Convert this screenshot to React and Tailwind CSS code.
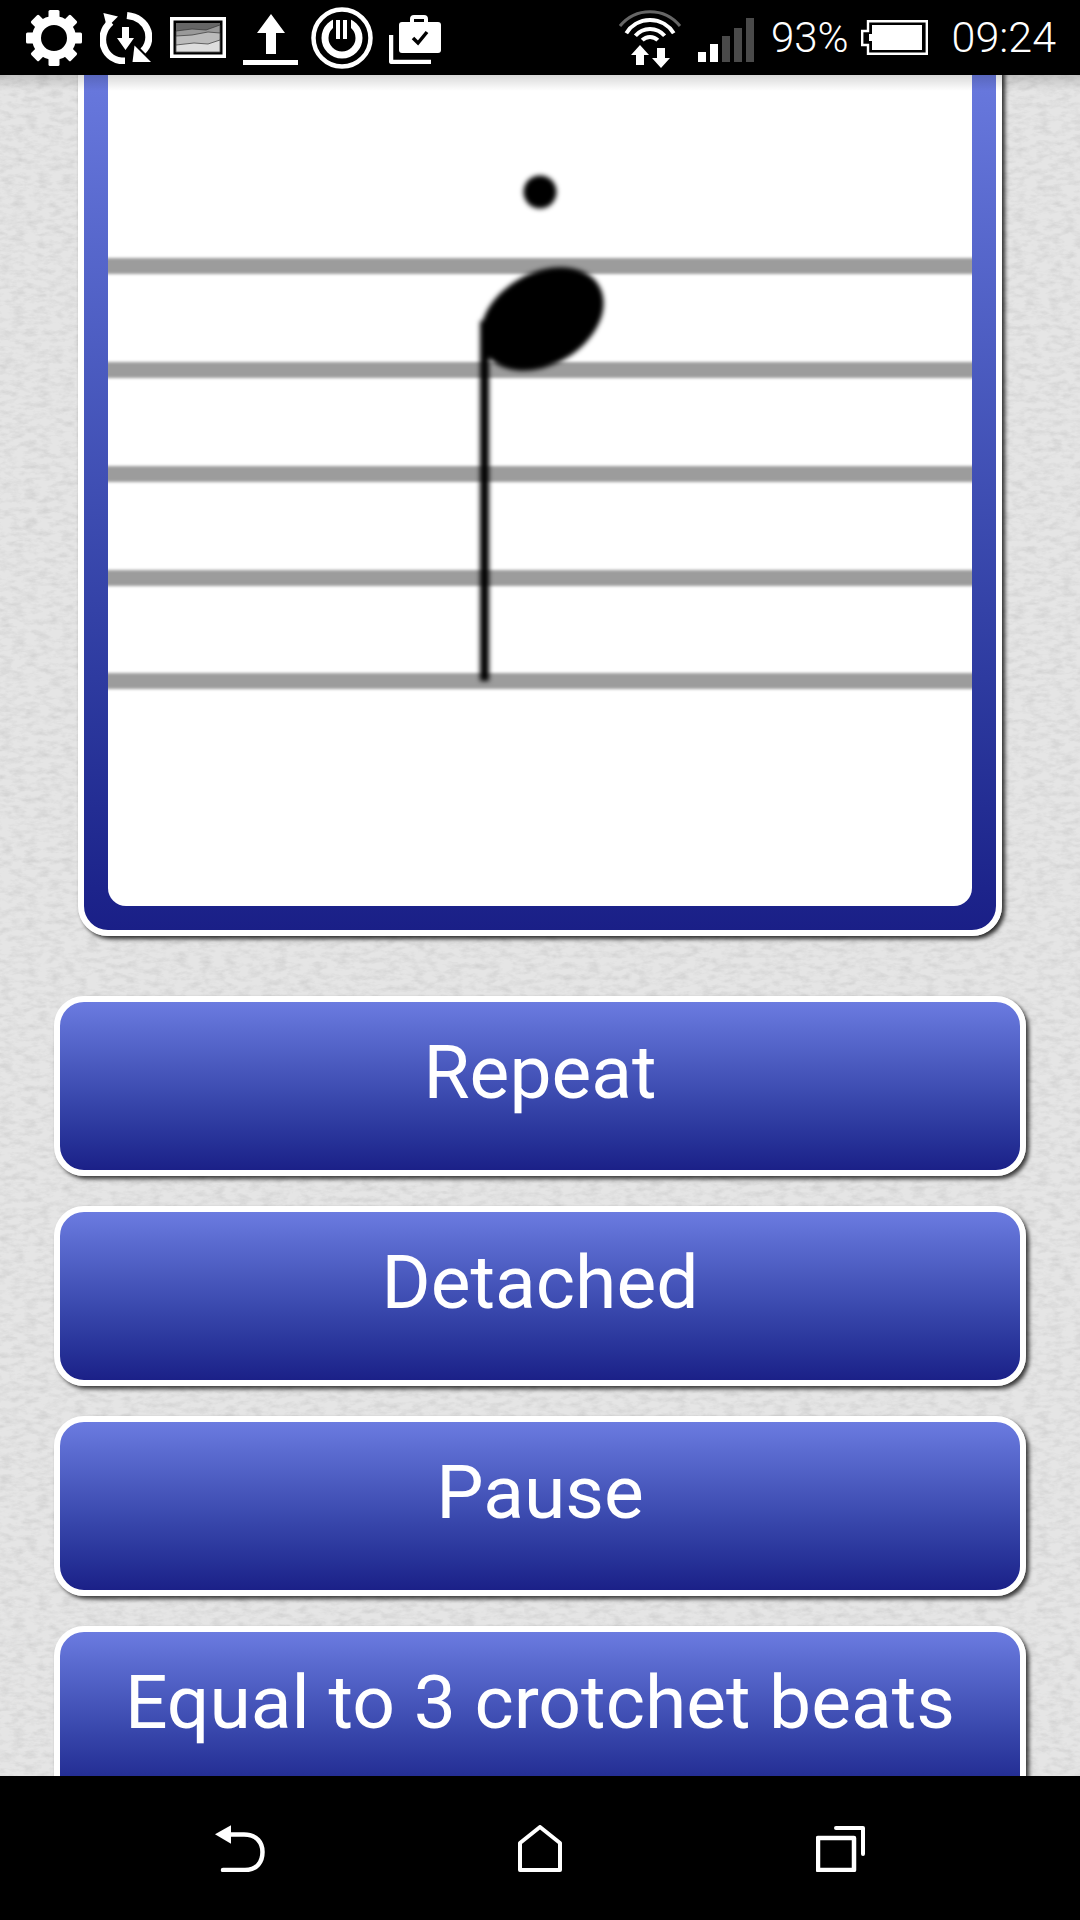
const Gear = () => (
  <svg width="60" height="56" viewBox="0 0 60 56" className="ml-[24px] shrink-0">
    <circle cx="30" cy="28" r="17.5" fill="none" stroke="#fff" strokeWidth="9" />
    {[0, 45, 90, 135, 180, 225, 270, 315].map((a) => (
      <rect key={a} x="24.5" y="0" width="11" height="9" rx="1.5" fill="#fff" transform={`rotate(${a} 30 28)`} />
    ))}
  </svg>
);

const Sync = () => (
  <svg width="52" height="52" viewBox="0 0 52 52" className="ml-[16px] shrink-0">
    <path d="M11 10C3 17 1 27 4 35C7 44 15 49 25 49" fill="none" stroke="#fff" strokeWidth="7" />
    <path d="M3.4 1L18 4.600L7 15.600Z" fill="#fff" />
    <path d="M27 3.500C37 4.500 45 10 48 19C50 27 48 34 43 39" fill="none" stroke="#fff" strokeWidth="7" />
    <path d="M34.500 33.600L51 50H32.500Z" fill="#fff" />
    <path d="M22 15H29V26H34L25.500 38L17 26H22Z" fill="#fff" />
  </svg>
);

const Picture = () => (
  <svg width="56" height="41" viewBox="0 0 56 41" className="ml-[18px] shrink-0">
    <rect width="56" height="41" fill="#fff" />
    <rect x="3.500" y="3.500" width="49" height="34" fill="#000" />
    <rect x="6" y="6" width="44" height="29" fill="#666" />
    <path d="M6 14L22 12L36 13L50 8V35H6Z" fill="#999" stroke="#333" strokeWidth="0.7" />
    <path d="M6 19L22 18L38 15L50 16V35H6Z" fill="#bbb" stroke="#333" strokeWidth="0.7" />
    <path d="M6 28L24 26L38 27L50 23V35H6Z" fill="#ddd" stroke="#333" strokeWidth="0.7" />
  </svg>
);

const Upload = () => (
  <svg width="55" height="51" viewBox="0 0 55 51" className="ml-[17px] mt-[4px] shrink-0">
    <path d="M28 0L42 19H33V40H23V19H14Z" fill="#fff" />
    <rect x="0" y="46" width="55" height="5" fill="#fff" />
  </svg>
);

const Power = () => (
  <svg width="62" height="62" viewBox="0 0 62 62" className="ml-[13px] shrink-0">
    <circle cx="31" cy="31" r="28.500" fill="none" stroke="#fff" strokeWidth="4.500" />
    <circle cx="31" cy="31" r="17" fill="none" stroke="#fff" strokeWidth="7" />
    <rect x="22" y="8" width="18" height="25" fill="#000" />
    <rect x="25" y="13" width="4" height="19" fill="#fff" />
    <rect x="32" y="13" width="4" height="19" fill="#fff" />
  </svg>
);

const Briefcase = () => (
  <svg width="52" height="49" viewBox="0 0 52 49" className="ml-[16px] mt-[3px] shrink-0">
    <path d="M23 8V4C23 2.500 24 2 25 2H35C36 2 37 2.500 37 4V8" fill="none" stroke="#fff" strokeWidth="4" />
    <rect x="10" y="7" width="42" height="31" rx="3" fill="#fff" />
    <path d="M24 23L29 28L38 17" fill="none" stroke="#000" strokeWidth="3.500" />
    <path d="M2 20V45.500C2 46.500 2.500 47 3.500 47H42" fill="none" stroke="#fff" strokeWidth="4.500" />
  </svg>
);

const Wifi = () => (
  <svg width="63" height="60" viewBox="0 0 63 60" className="ml-auto shrink-0">
    <path d="M1 18A38.500 38.500 0 0 1 61 18" fill="none" stroke="#666" strokeWidth="3" />
    <path d="M7.300 25.200A28 28 0 0 1 54.700 25.200" fill="none" stroke="#fff" strokeWidth="4" />
    <path d="M16.400 27.800A19 19 0 0 1 45.600 27.800" fill="none" stroke="#fff" strokeWidth="4" />
    <path d="M23.200 32.200A11 11 0 0 1 38.800 32.200" fill="none" stroke="#fff" strokeWidth="4" />
    <path d="M21 37L30 47H25V57H17V47H12Z" fill="#fff" />
    <path d="M38 40H46V50H51L42 60L33 50H38Z" fill="#fff" />
  </svg>
);

const Signal = () => (
  <svg width="56" height="44" viewBox="0 0 56 44" className="ml-[16px] mt-[5px] shrink-0">
    <rect x="0" y="34" width="8" height="10" fill="#fff" />
    <rect x="12" y="26" width="8" height="18" fill="#fff" />
    <rect x="24" y="18" width="8" height="26" fill="#4a4a4a" />
    <rect x="36" y="10" width="8" height="34" fill="#4a4a4a" />
    <rect x="48" y="0" width="8" height="44" fill="#4a4a4a" />
  </svg>
);

const Battery = () => (
  <svg width="67" height="35" viewBox="0 0 67 35" className="ml-[12px] shrink-0">
    <path d="M7 1.200H65.800V33.800H7V25H1.200V11H7Z" fill="none" stroke="#fff" strokeWidth="2.400" />
    <rect x="11" y="5" width="50" height="25" fill="#fff" />
    <rect x="8" y="14" width="4" height="7" fill="#fff" />
  </svg>
);

const Score = () => (
  <svg width="864" height="855" viewBox="0 0 864 855" className="block">
    <defs>
      <filter id="soft" x="-5%" y="-5%" width="110%" height="110%">
        <feGaussianBlur stdDeviation="2.400" />
      </filter>
      <filter id="softLine" x="-5%" y="-50%" width="110%" height="200%">
        <feGaussianBlur stdDeviation="1.500" />
      </filter>
    </defs>
    <g filter="url(#softLine)">
      {[215, 319, 423, 527, 630].map((y) => (
        <rect key={y} x="-10" y={y - 8} width="884" height="16" fill="#9c9c9c" />
      ))}
    </g>
    <g filter="url(#soft)">
      <ellipse cx="434" cy="268" rx="66" ry="46" transform="rotate(-30 434 268)" fill="#000" />
      <rect x="372" y="270" width="9" height="360" fill="#000" />
      <circle cx="432" cy="141" r="16.500" fill="#000" />
    </g>
  </svg>
);

const AnswerButton = ({ label }) => (
  <button className="h-[180px] w-full shrink-0 rounded-[30px] border-[6px] border-white bg-linear-to-b from-[#6b7be0] to-[#1b2088] pb-[28px] text-center text-[75px] leading-none text-white shadow-[3px_3px_4px_rgba(0,0,0,0.75)]">
    {label}
  </button>
);

const App = () => {
  return (
    <div className="flex h-[1920px] w-[1080px] flex-col overflow-hidden bg-black font-['Roboto',sans-serif]">
      <div className="flex h-[75px] shrink-0 items-center pr-[24px] text-[43px] font-[350] leading-none text-white">
        <Gear />
        <Sync />
        <Picture />
        <Upload />
        <Power />
        <Briefcase />
        <Wifi />
        <Signal />
        <span className="ml-[17px] text-[42px]">93%</span>
        <Battery />
        <span className="ml-[24px]">09:24</span>
      </div>

      <div className="relative min-h-0 flex-1 overflow-hidden bg-[#e5e5e5]">
        <svg className="absolute inset-0 h-full w-full" aria-hidden="true">
          <filter id="paper">
            <feTurbulence type="fractalNoise" baseFrequency="0.08 0.18" numOctaves="4" seed="4" />
            <feColorMatrix values="0 0 0 0 0.55  0 0 0 0 0.55  0 0 0 0 0.55  1.1 0 0 0 -0.44" />
          </filter>
          <rect width="100%" height="100%" filter="url(#paper)" />
        </svg>

        <div className="relative flex flex-col">
          <div className="mx-[78px] -mt-[30px] h-[891px] shrink-0 rounded-[30px] border-[6px] border-white bg-linear-to-b from-[#6b7be0] to-[#1a1f87] px-[24px] pb-[24px] shadow-[3px_3px_4px_rgba(0,0,0,0.8)]">
            <div className="h-full overflow-hidden rounded-b-[18px] bg-white">
              <Score />
            </div>
          </div>

          <div className="mx-[54px] mt-[60px] flex flex-col gap-[30px]">
            <AnswerButton label="Repeat" />
            <AnswerButton label="Detached" />
            <AnswerButton label="Pause" />
            <AnswerButton label="Equal to 3 crotchet beats" />
          </div>
        </div>

        <div className="absolute inset-x-0 top-0 h-[16px] bg-linear-to-b from-black/15 to-transparent" />
      </div>

      <div className="flex h-[144px] shrink-0 items-center pl-[215px]">
        <svg width="50" height="47" viewBox="0 0 50 47" className="shrink-0">
          <path d="M0 9.300L16 0.300V18.700Z" fill="#fff" />
          <path d="M14 9.500H29C42 9.500 47.500 18 47.500 27C47.500 37 42 45 30 45H8" fill="none" stroke="#fff" strokeWidth="4.500" strokeLinecap="round" />
        </svg>
        <svg width="44" height="47" viewBox="0 0 44 47" className="ml-[253px] shrink-0">
          <path d="M22 2L42 18V45H2V18Z" fill="none" stroke="#fff" strokeWidth="4" strokeLinejoin="round" />
        </svg>
        <svg width="49" height="47" viewBox="0 0 49 47" className="ml-[254px] shrink-0">
          <rect x="2" y="13" width="36" height="32" fill="none" stroke="#fff" strokeWidth="4.500" strokeLinejoin="round" />
          <path d="M20 3H47V29" fill="none" stroke="#fff" strokeWidth="4" strokeLinecap="round" strokeLinejoin="round" />
        </svg>
      </div>
    </div>
  );
};

export default App;
